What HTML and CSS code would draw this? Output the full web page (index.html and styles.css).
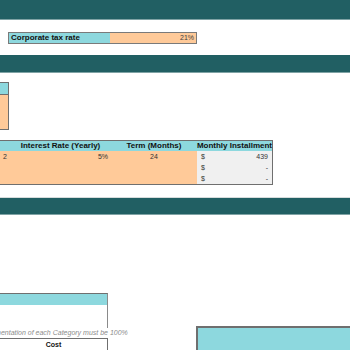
FILE: index.html
```html
<!DOCTYPE html>
<html lang="en">

<head>
    <meta charset="UTF-8" />
    <meta name="viewport" content="width=device-width, initial-scale=1.0" />
    <title>Financial Model Inputs</title>
    <link rel="stylesheet" href="styles.css">
</head>

<body>
    <div class="band band-top"></div>

    <div class="tax-row">
        <div class="tax-label">Corporate tax rate</div>
        <div class="tax-value">21%</div>
    </div>

    <div class="band band-loans"></div>

    <div class="side-box">
        <div class="side-head"></div>
        <div class="side-body"></div>
    </div>

    <table class="loan-table">
        <tr>
            <th class="col-id"></th>
            <th class="col-rate">Interest Rate (Yearly)</th>
            <th class="col-term">Term (Months)</th>
            <th class="col-pay">Monthly Installment</th>
        </tr>
        <tr>
            <td class="input">2</td>
            <td class="input num">5%</td>
            <td class="input center">24</td>
            <td class="calc"><span>$</span><span>439</span></td>
        </tr>
        <tr>
            <td class="input"></td>
            <td class="input"></td>
            <td class="input"></td>
            <td class="calc"><span>$</span><span>-</span></td>
        </tr>
        <tr>
            <td class="input"></td>
            <td class="input"></td>
            <td class="input"></td>
            <td class="calc"><span>$</span><span>-</span></td>
        </tr>
    </table>

    <div class="band band-costs"></div>

    <div class="costs">
        <div class="costs-left">
            <div class="cat-box">
                <div class="cat-head"></div>
                <div class="cat-body"></div>
            </div>
            <div class="note">Implementation of each Category must be 100%</div>
            <div class="cost-head">Cost</div>
        </div>
        <div class="summary-box"></div>
    </div>
</body>

</html>
```

FILE: styles.css
```css
body {
    font-family: "Liberation Sans", Arial, sans-serif;
    font-size: 8px;
    color: #111;
    margin: 0;
    background-color: white;
    overflow: hidden;
}

/* section header bars */
.band {
    background-color: #215f63;
    border-bottom: 1px solid #7fa3a5;
}

.band-top {
    height: 19px;
}

.band-loans {
    height: 17px;
    margin-top: 11px;
}

.band-costs {
    height: 16px;
    margin-top: 12px;
    border-top: 1px solid #d6dcdc;
}

/* tax input */
.tax-row {
    display: flex;
    width: 187px;
    height: 10px;
    margin: 12px 0 0 8px;
    border: 1px solid #7a7a7a;
}

.tax-label {
    width: 99px;
    background-color: #8dd8de;
    font-weight: bold;
    line-height: 10px;
    padding-left: 2px;
}

.tax-value {
    flex: 1;
    background-color: #ffca99;
    text-align: right;
    padding-right: 2px;
    line-height: 10px;
    font-size: 7px;
    color: #404040;
}

/* small box cut off at the left edge */
.side-box {
    width: 8px;
    margin-top: 9px;
    border: 1px solid #6f6f6f;
    border-left: none;
}

.side-head {
    height: 11px;
    background-color: #8dd8de;
    border-bottom: 1px solid #6f6f6f;
}

.side-body {
    height: 34px;
    background-color: #ffca99;
}

/* loans table */
.loan-table {
    margin-top: 10px;
    border-collapse: collapse;
    border: 1px solid #6f6f6f;
    border-left: none;
    width: 273px;
}

.loan-table th {
    background-color: #8dd8de;
    font-weight: bold;
    height: 10px;
    padding: 0;
    line-height: 10px;
    white-space: nowrap;
}

.loan-table td {
    height: 11px;
    padding: 0 3px;
    line-height: 11px;
    font-size: 7px;
    color: #333;
}

.col-id {
    width: 8px;
}

.col-rate {
    width: 102px;
}

.col-term {
    width: 87px;
}

.input {
    background-color: #ffca99;
}

.num {
    text-align: right;
}

.center {
    text-align: center;
}

.loan-table td.calc {
    background-color: #f0f0f0;
    display: flex;
    justify-content: space-between;
    padding: 0 4px 0 4px;
}

/* cost allocation area */
.costs {
    display: flex;
    align-items: flex-start;
    margin-top: 78px;
}

.costs-left {
    width: 108px;
}

.cat-box {
    border-right: 1px solid #8a8a8a;
    border-top: 1px solid #6f6f6f;
}

.cat-head {
    height: 11px;
    background-color: #8dd8de;
}

.cat-body {
    height: 23px;
}

.note {
    margin-left: -22px;
    white-space: nowrap;
    font-style: italic;
    font-size: 7px;
    color: #8c8c8c;
    line-height: 9px;
}

.cost-head {
    margin-top: 1px;
    border: 1px solid #6f6f6f;
    border-left: none;
    text-align: center;
    font-weight: bold;
    font-size: 7px;
    line-height: 11px;
}

.summary-box {
    margin: 33px 0 0 88px;
    flex: 1;
    height: 22px;
    background-color: #8dd8de;
    border-top: 2px solid #6f6f6f;
    border-left: 2px solid #6f6f6f;
    border-bottom: 2px solid #f4f4f4;
}
```
